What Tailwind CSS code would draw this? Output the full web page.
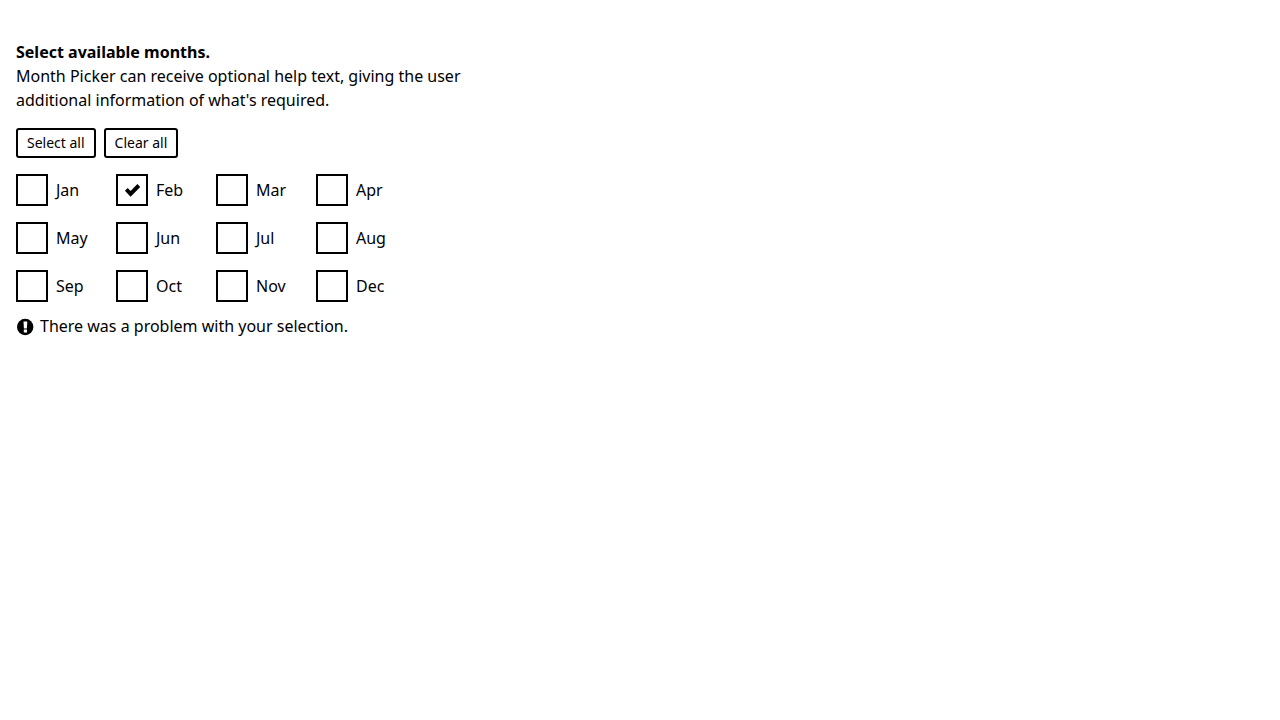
<!DOCTYPE html>
<html lang="en">
<head>
<meta charset="utf-8">
<meta name="viewport" content="width=device-width, initial-scale=1">
<title>Month Picker</title>
<script src="https://cdn.jsdelivr.net/npm/@tailwindcss/browser@4"></script>
</head>
<body class="bg-white px-4 py-10 font-['Noto_Sans',sans-serif] text-base text-black">
<form>
<fieldset class="max-w-[480px]" aria-describedby="hint error">
<legend class="font-bold leading-6">Select available months.</legend>
<p id="hint">Month Picker can receive optional help text, giving the user additional information of what's required.</p>
<div class="mt-4 flex gap-2">
<button type="button" class="rounded-[3px] border-2 border-black px-[9px] py-[3px] text-sm">Select all</button>
<button type="button" class="rounded-[3px] border-2 border-black px-[9px] py-[3px] text-sm">Clear all</button>
</div>
<div id="months" class="mt-4 grid max-w-[400px] grid-cols-4 gap-y-4"></div>
</fieldset>
<p id="error" class="mt-3 flex items-center gap-1.5">
<svg class="mt-px size-[18px]" viewBox="0 0 18 18" aria-hidden="true"><circle cx="9.2" cy="9" r="8.2"/><path d="M7.5 3.5h3.8l-.4 7H7.9zM7.8 11.5h3.2v3H7.8z" fill="#fff"/></svg>
<span>There was a problem with your selection.</span>
</p>
</form>
<script>
const names = ['Jan','Feb','Mar','Apr','May','Jun','Jul','Aug','Sep','Oct','Nov','Dec'];
document.getElementById('months').innerHTML = names.map(n => `
<label class="flex items-center gap-2">
<span class="grid size-8 place-items-center">
<input type="checkbox" name="month" value="${n}" ${n === 'Feb' ? 'checked' : ''} class="peer col-start-1 row-start-1 size-8 appearance-none border-2 border-black bg-white">
<svg class="pointer-events-none invisible col-start-1 row-start-1 size-4 peer-checked:visible" viewBox="0 0 16 16" aria-hidden="true"><path d="M.9 8.8 3.7 6l2.9 2.9 6.8-6.8L16.2 5 6.6 14.7z"/></svg>
</span>
<span>${n}</span>
</label>`).join('');
const boxes = () => document.querySelectorAll('input[name=month]');
const [all, none] = document.querySelectorAll('button');
all.onclick = () => boxes().forEach(b => b.checked = true);
none.onclick = () => boxes().forEach(b => b.checked = false);
</script>
</body>
</html>
